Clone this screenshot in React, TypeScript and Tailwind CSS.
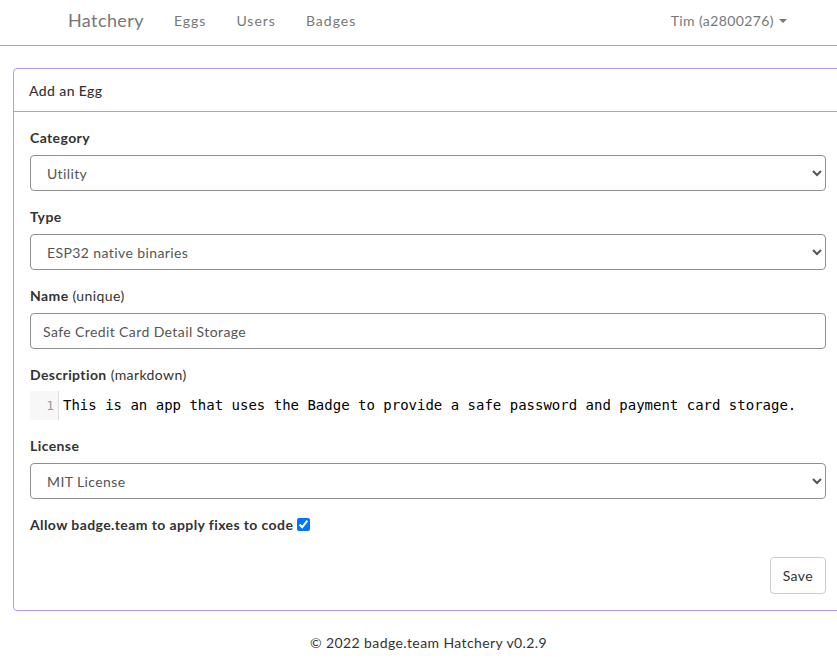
import React from 'react';

const font = { fontFamily: 'Lato, "Open Sans", "Liberation Sans", sans-serif' };

function Field({ label, hint, children }: { label: string; hint?: string; children: React.ReactNode }) {
  return (
    <div className="mb-4">
      <label className="block leading-[19px] mb-2 text-[14px] text-[#333]">
        <span className="font-bold">{label}</span>
        {hint && <span className="font-normal"> {hint}</span>}
      </label>
      {children}
    </div>
  );
}

function Select({ value }: { value: string }) {
  return (
    <select
      defaultValue={value}
      className="block w-full h-[36px] pl-3 pr-2 border border-[#8f8f8f] rounded-[4px] bg-white text-[14px] text-[#555] tracking-[0.4px]"
    >
      <option>{value}</option>
    </select>
  );
}

export default function App() {
  return (
    <div className="w-[837px] min-h-[670px] overflow-hidden bg-white text-[14px] text-[#333] tracking-[0.4px]" style={font}>
      {/* Navbar */}
      <nav className="h-[46px] pb-[4px] border-b border-[#b197fc] flex items-center justify-between pl-[53px] pr-[35px]">
        <div className="flex items-center">
          <a className="px-[15px] text-[18px] text-[#777]">Hatchery</a>
          <a className="px-[15px] text-[#777] tracking-[1px]">Eggs</a>
          <a className="px-[15px] text-[#777] tracking-[1px]">Users</a>
          <a className="px-[15px] text-[#777] tracking-[1px]">Badges</a>
        </div>
        <a className="px-[15px] text-[#777] flex items-center">
          Tim (a2800276)
          <span className="ml-[5px] inline-block w-0 h-0 border-x-[4px] border-x-transparent border-t-[4px] border-t-[#777]" />
        </a>
      </nav>

      {/* Card */}
      <div className="mt-[22px] ml-[13px] w-[830px] border border-[#b197fc] rounded-[4px]">
        <div className="h-[43px] px-[15px] flex items-center border-b border-[#b197fc] font-medium">Add an Egg</div>
        <div className="p-4">
          <Field label="Category">
            <Select value="Utility" />
          </Field>
          <Field label="Type">
            <Select value="ESP32 native binaries" />
          </Field>
          <Field label="Name" hint="(unique)">
            <input
              defaultValue="Safe Credit Card Detail Storage"
              className="block w-full h-[36px] px-3 border border-[#8f8f8f] rounded-[4px] text-[14px] text-[#555] tracking-[0.4px]"
            />
          </Field>
          <div className="mb-4">
            <label className="block leading-[19px] mb-[7px] text-[14px]">
              <span className="font-bold">Description</span> (markdown)
            </label>
            <div className="flex h-[29px] tracking-normal">
              <div className="w-[29px] bg-[#f7f7f7] border-r border-[#ddd] flex items-center justify-end pr-[4px] text-[13px] text-[#999]" style={{ fontFamily: '"DejaVu Sans Mono", monospace' }}>
                1
              </div>
              <div className="pl-[4px] flex items-center text-[14px] text-black whitespace-pre" style={{ fontFamily: '"DejaVu Sans Mono", monospace' }}>
                This is an app that uses the Badge to provide a safe password and payment card storage.
              </div>
            </div>
          </div>
          <Field label="License">
            <Select value="MIT License" />
          </Field>
          <div className="mb-[23px] leading-[19px] flex items-center font-bold">
            Allow badge.team to apply fixes to code
            <input type="checkbox" defaultChecked className="ml-[4px] w-[13px] h-[13px]" />
          </div>
          <div className="flex justify-end">
            <button className="h-[37px] px-3 border border-[#ccc] rounded-[4px] text-[#333] bg-white">Save</button>
          </div>
        </div>
      </div>

      <footer className="mt-[22px] pl-[20px] text-center text-[#333] leading-[20px]">© 2022 badge.team Hatchery v0.2.9</footer>
    </div>
  );
}
